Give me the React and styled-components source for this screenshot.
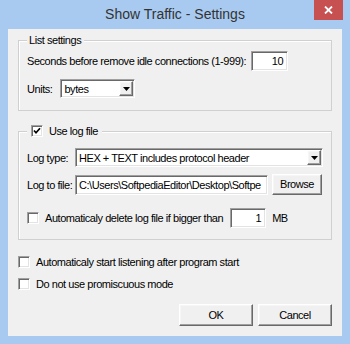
import React from "react";
import styled, { createGlobalStyle, css } from "styled-components";

const Global = createGlobalStyle`
  html, body { margin: 0; padding: 0; }
  body { width: 350px; height: 344px; overflow: hidden; background: #a8caf0; }
`;

const uiFont = css`
  font-family: "Liberation Sans", Arial, sans-serif;
  font-size: 11px;
  letter-spacing: -0.45px;
  color: #000;
`;

const sunken = css`
  background: #fff;
  border: 1px solid;
  border-color: #a0a0a0 #ffffff #ffffff #a0a0a0;
  box-shadow: inset 1px 1px #696969, inset -1px -1px #e3e3e3;
  box-sizing: border-box;
`;

const raised = css`
  background: #f0f0f0;
  border: 1px solid;
  border-color: #ffffff #696969 #696969 #ffffff;
  box-shadow: inset -1px -1px #a0a0a0, inset 1px 1px #f6f6f6;
  box-sizing: border-box;
`;

const Window = styled.div`
  width: 350px;
  height: 344px;
  box-sizing: border-box;
  padding: 0 8px 8px;
  display: flex;
  flex-direction: column;
  background: #a8caf0;
`;

const TitleBar = styled.div`
  height: 29px;
  margin: 0 -8px;
  display: grid;
  grid-template-columns: 1fr auto 1fr;
`;

const Title = styled.div`
  grid-column: 2;
  font-family: "Liberation Sans", Arial, sans-serif;
  font-size: 14px;
  line-height: 29px;
  color: #333;
`;

const CloseButton = styled.div`
  grid-column: 3;
  justify-self: end;
  align-self: start;
  width: 29px;
  height: 20px;
  margin-right: 7px;
  background: #c75050;
  display: flex;
  align-items: center;
  justify-content: center;
`;

const Client = styled.div`
  flex: 1;
  background: #f0f0f0;
  padding: 0 10px 10px;
  display: flex;
  flex-direction: column;
  ${uiFont}
`;

const GroupBox = styled.fieldset`
  margin: ${(p) => p.$top}px 0 0;
  padding: ${(p) => p.$pt}px 8px ${(p) => p.$pb}px;
  min-inline-size: 0;
  border: 1px solid #d0d0d0;
  box-shadow: inset 1px 1px #ffffff;
  display: flex;
  flex-direction: column;
  gap: ${(p) => p.$gap}px;
`;

const Legend = styled.legend`
  padding: 0 ${(p) => p.$pr}px 0 ${(p) => p.$pl}px;
  margin-left: 0;
  height: 14px;
  line-height: 14px;
  background: #f0f0f0;
  display: flex;
  align-items: center;
  gap: 6px;
`;

const Row = styled.div`
  display: flex;
  align-items: center;
  gap: ${(p) => p.$gap}px;
  margin-top: ${(p) => p.$mt || 0}px;
`;

const FormGrid = styled.div`
  display: grid;
  grid-template-columns: 48px 1fr;
  row-gap: 7px;
  align-items: center;
`;

const Label = styled.span`
  white-space: nowrap;
  line-height: 14px;
`;

const TextField = styled.div`
  ${sunken}
  width: ${(p) => p.$w};
  height: 20px;
  margin-left: ${(p) => p.$ml || 0}px;
  padding: 0 4px 0 3px;
  line-height: 18px;
  text-align: ${(p) => p.$align || "left"};
  white-space: nowrap;
  overflow: hidden;
`;

const Combo = styled.div`
  ${sunken}
  width: ${(p) => p.$w};
  height: 19px;
  display: flex;
  align-items: stretch;
  padding: 1px;
`;

const ComboText = styled.div`
  flex: 1;
  padding-left: 2px;
  line-height: 17px;
  white-space: nowrap;
  overflow: hidden;
`;

const ArrowButton = styled.div`
  ${raised}
  width: 14px;
  display: flex;
  align-items: center;
  justify-content: center;
`;

const Box = styled.span`
  ${sunken}
  width: 12px;
  height: 12px;
  flex: none;
  display: flex;
  align-items: center;
  justify-content: center;
`;

const Button = styled.div`
  ${raised}
  width: ${(p) => p.$w || 74}px;
  height: ${(p) => p.$h || 22}px;
  line-height: ${(p) => (p.$h || 22) - 2}px;
  text-align: center;
  flex: none;
`;

const ButtonBar = styled.div`
  margin-top: auto;
  display: flex;
  justify-content: flex-end;
  gap: 5px;
`;

const Arrow = () => (
  <svg width="7" height="4" viewBox="0 0 7 4">
    <path d="M0 0 H7 L3.5 4 Z" fill="#000" />
  </svg>
);

const Check = ({ checked }) => (
  <Box>
    {checked && (
      <svg width="8" height="8" viewBox="0 0 8 8">
        <path d="M1 3.5 L3 5.8 L7 1.2" stroke="#000" strokeWidth="1.7" fill="none" />
      </svg>
    )}
  </Box>
);

export default function App() {
  return (
    <>
      <Global />
      <Window>
        <TitleBar>
          <Title>Show Traffic - Settings</Title>
          <CloseButton>
            <svg width="9" height="8" viewBox="0 0 9 8">
              <path d="M1 0.5 L8 7.5 M8 0.5 L1 7.5" stroke="#fff" strokeWidth="1.8" />
            </svg>
          </CloseButton>
        </TitleBar>
        <Client>
          <GroupBox $top={4} $pt={4} $pb={12} $gap={8}>
            <Legend $pl={2} $pr={3}>List settings</Legend>
            <Row $gap={5}>
              <Label>Seconds before remove idle connections (1-999):</Label>
              <TextField $w="37px" $align="right">10</TextField>
            </Row>
            <Row $gap={8}>
              <Label>Units:</Label>
              <Combo $w="75px">
                <ComboText>bytes</ComboText>
                <ArrowButton>
                  <Arrow />
                </ArrowButton>
              </Combo>
            </Row>
          </GroupBox>

          <GroupBox $top={13} $pt={10} $pb={11} $gap={13}>
            <Legend $pl={4} $pr={4}>
              <Check checked />
              <span>Use log file</span>
            </Legend>
            <FormGrid>
              <Label>Log type:</Label>
              <Combo $w="100%">
                <ComboText>HEX + TEXT includes protocol header</ComboText>
                <ArrowButton>
                  <Arrow />
                </ArrowButton>
              </Combo>
              <Label>Log to file:</Label>
              <Row $gap={4}>
                <TextField $w="193px">C:\Users\SoftpediaEditor\Desktop\Softpe</TextField>
                <Button $w={50} $h={21}>Browse</Button>
              </Row>
            </FormGrid>
            <Row $gap={6}>
              <Check />
              <Label>Automaticaly delete log file if bigger than</Label>
              <TextField $w="36px" $align="right" $ml={1}>1</TextField>
              <Label>MB</Label>
            </Row>
          </GroupBox>

          <Row $gap={6} $mt={15}>
            <Check />
            <Label>Automaticaly start listening after program start</Label>
          </Row>
          <Row $gap={6} $mt={8}>
            <Check />
            <Label>Do not use promiscuous mode</Label>
          </Row>

          <ButtonBar>
            <Button>OK</Button>
            <Button>Cancel</Button>
          </ButtonBar>
        </Client>
      </Window>
    </>
  );
}
